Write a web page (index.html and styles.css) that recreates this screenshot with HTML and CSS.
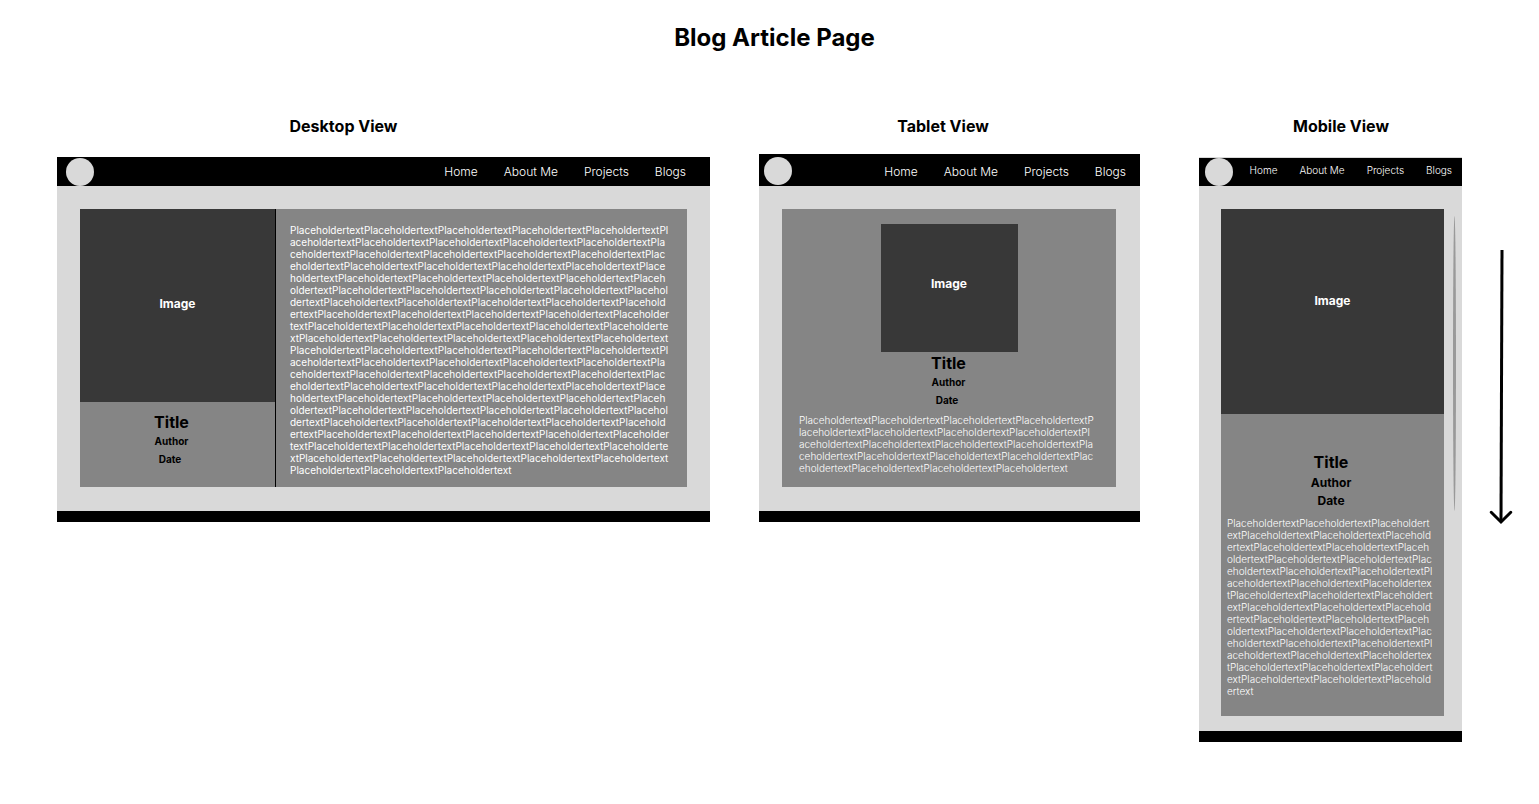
FILE: index.html
```html
<!DOCTYPE html>
<html lang="en">
<head>
  <meta charset="utf-8">
  <meta name="viewport" content="width=device-width, initial-scale=1">
  <title>Blog Article Page</title>
  <link rel="stylesheet" href="styles.css">
</head>
<body>
  <h1 class="page-title">Blog Article Page</h1>
  <main class="board">
    <section class="view view-desktop">
      <h2 class="view-title">Desktop View</h2>
      <div class="frame">
        <header class="bar">
          <span class="logo"></span>
          <nav class="links"><a href="#">Home</a><a href="#">About Me</a><a href="#">Projects</a><a href="#">Blogs</a></nav>
        </header>
        <div class="content">
          <article class="card">
            <div class="side">
              <div class="image">Image</div>
              <div class="meta">
                <h3 class="title">Title</h3>
                <p class="detail">Author</p>
                <p class="detail date">Date</p>
              </div>
            </div>
            <p class="text" data-repeat="105">Placeholdertext</p>
          </article>
        </div>
        <footer class="footer"></footer>
      </div>
    </section>

    <section class="view view-tablet">
      <h2 class="view-title">Tablet View</h2>
      <div class="frame">
        <header class="bar">
          <span class="logo"></span>
          <nav class="links"><a href="#">Home</a><a href="#">About Me</a><a href="#">Projects</a><a href="#">Blogs</a></nav>
        </header>
        <div class="content">
          <article class="card">
            <div class="image">Image</div>
            <div class="meta">
              <h3 class="title">Title</h3>
              <p class="detail">Author</p>
              <p class="detail date">Date</p>
            </div>
            <p class="text" data-repeat="20">Placeholdertext</p>
          </article>
        </div>
        <footer class="footer"></footer>
      </div>
    </section>

    <section class="view view-mobile">
      <h2 class="view-title">Mobile View</h2>
      <div class="frame">
        <header class="bar">
          <span class="logo"></span>
          <nav class="links"><a href="#">Home</a><a href="#">About Me</a><a href="#">Projects</a><a href="#">Blogs</a></nav>
        </header>
        <div class="content">
          <article class="card">
            <div class="image">Image</div>
            <div class="meta">
              <h3 class="title">Title</h3>
              <p class="detail">Author</p>
              <p class="detail">Date</p>
            </div>
            <p class="text" data-repeat="40">Placeholdertext</p>
          </article>
          <span class="scrollbar"></span>
        </div>
        <footer class="footer"></footer>
      </div>
    </section>

    <svg class="arrow" width="24" height="275" viewBox="0 0 24 275" fill="none" stroke="#000" stroke-width="3" aria-hidden="true">
      <path d="M13 0L12 272"/>
      <path d="M2.2 262.3L12 272L21.8 262.3" stroke-linecap="round"/>
    </svg>
  </main>
  <script src="script.js"></script>
</body>
</html>
```

FILE: styles.css
```css
* {
  box-sizing: border-box;
}

body {
  margin: 0;
  background: #fff;
  color: #000;
  font-family: Inter, "Liberation Sans", sans-serif;
}

h1, h2, h3, p {
  margin: 0;
}

.page-title {
  padding: 23px 0 0 10px;
  font-size: 24px;
  line-height: 30px;
  font-weight: 700;
  text-align: center;
}

.board {
  display: flex;
  align-items: flex-start;
  padding: 63px 26px 62px 57px;
}

.view {
  min-width: 0;
}

.view-desktop {
  flex: 653 1 0;
}

.view-tablet {
  flex: 381 1 0;
  margin-left: 49px;
}

.view-mobile {
  flex: 263 1 0;
  margin-left: 59px;
}

.view-title {
  padding-bottom: 21px;
  font-size: 16px;
  line-height: 20px;
  font-weight: 700;
  text-align: center;
}

.view-desktop .view-title {
  padding-right: 80px;
}

.view-tablet .view-title {
  padding-right: 13px;
  padding-bottom: 18px;
}

.view-mobile .view-title {
  padding-left: 21px;
}

/* Navigation bar */

.bar {
  display: flex;
  align-items: center;
  justify-content: space-between;
  padding: 1px 24px 0 9px;
  background: #000;
}

.view-tablet .bar {
  padding: 3px 14px 1px 5px;
}

.view-mobile .bar {
  padding: 0 10px 0 6px;
  border-top: 1px solid #d9d9d9;
}

.logo {
  width: 28px;
  height: 28px;
  flex: none;
  border-radius: 50%;
  background: #d9d9d9;
}

.links {
  display: flex;
  gap: 26px;
  font-size: 12px;
  line-height: 16px;
  font-weight: 300;
  white-space: nowrap;
}

.links a {
  color: #fff;
  text-decoration: none;
}

.view-tablet .links {
  padding-top: 2px;
}

.view-mobile .links {
  gap: 22px;
  padding-bottom: 4px;
  font-size: 10px;
}

/* Article */

.content {
  position: relative;
  padding: 23px 23px 24px;
  background: #d9d9d9;
}

.view-tablet .content {
  padding-right: 24px;
}

.view-mobile .content {
  padding: 23px 18px 15px 22px;
}

.card {
  background: #858585;
}

.image {
  display: flex;
  align-items: center;
  justify-content: center;
  background: #383838;
  color: #fff;
  font-size: 12px;
  line-height: 16px;
  font-weight: 700;
}

.meta {
  text-align: center;
  font-weight: 700;
}

.title {
  font-size: 16px;
  line-height: 20px;
}

.detail {
  font-size: 10px;
  line-height: 18px;
}

.date {
  padding-right: 3px;
}

.text {
  color: #fff;
  font-size: 10px;
  line-height: 12px;
  font-weight: 300;
  word-break: break-all;
}

.view-desktop .card {
  display: grid;
  grid-template-columns: 196fr 411fr;
}

.side {
  border-right: 1px solid #000;
}

.view-desktop .image {
  height: 193px;
  padding-bottom: 3px;
}

.view-desktop .meta {
  padding: 10px 12px 19px 0;
}

.view-desktop .text {
  padding: 15px 17px 11px 14px;
  font-weight: 400;
}

.view-tablet .card {
  padding: 15px 0 13px;
}

.view-tablet .image {
  max-width: 137px;
  height: 128px;
  margin: 0 auto;
  padding-bottom: 8px;
}

.view-tablet .meta {
  padding: 1px 1px 5px 0;
}

.view-tablet .text {
  padding: 0 21px 0 17px;
}

.view-mobile .card {
  padding-bottom: 19px;
}

.view-mobile .image {
  height: 205px;
  padding-bottom: 21px;
}

.view-mobile .meta {
  padding: 38px 3px 7px 0;
}

.view-mobile .title {
  padding-bottom: 2px;
}

.view-mobile .detail {
  font-size: 12px;
}

.view-mobile .text {
  padding: 0 10px 0 6px;
}

.scrollbar {
  position: absolute;
  top: 30px;
  right: 6px;
  width: 3px;
  height: 295px;
  border-radius: 50%;
  background: #999;
}

.footer {
  height: 11px;
  background: #000;
}

.arrow {
  flex: none;
  margin: 134px 0 0 27px;
}
```

FILE: script.js
```js
// Fill each text block with its placeholder word
document.querySelectorAll("[data-repeat]").forEach(function (block) {
  block.textContent = block.textContent.repeat(Number(block.dataset.repeat));
});
```
